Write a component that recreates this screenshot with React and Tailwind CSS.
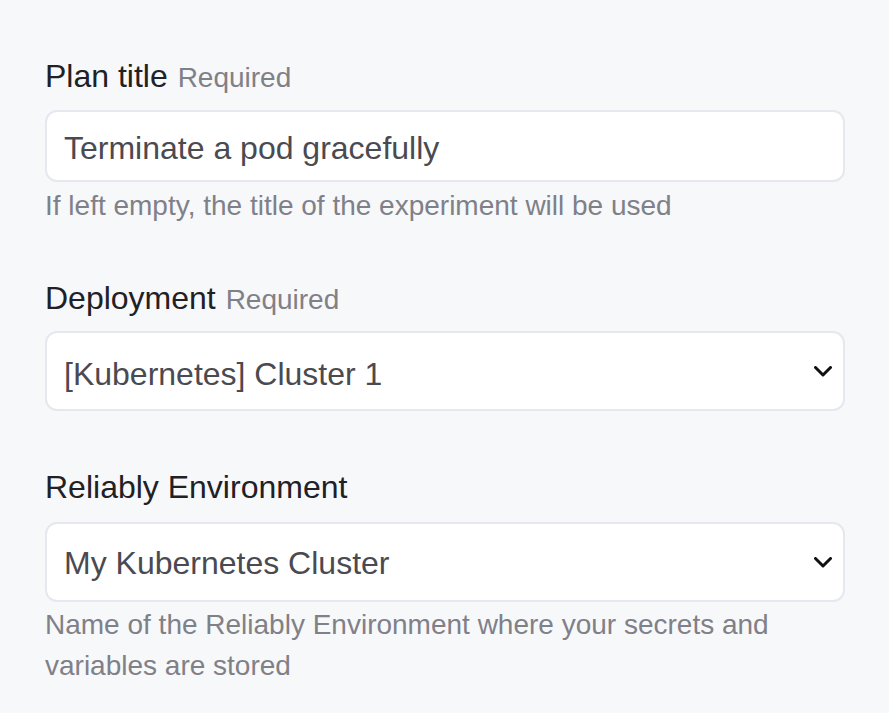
import React from "react";

const Chevron = () => (
  <svg width="18" height="11" viewBox="0 0 18 11" fill="none" className="shrink-0">
    <path d="M1.5 1.5L9 9L16.5 1.5" stroke="#111" strokeWidth="3" strokeLinecap="round" strokeLinejoin="round" />
  </svg>
);

const SelectBox = ({ value, className, textClass }) => (
  <div className={`${className} h-[80px] flex items-center justify-between bg-white border-2 border-[#e6e7ef] rounded-[12px] pl-[17px] pr-[11px] text-[32px] text-[#4a4a50]`}>
    <span className={textClass}>{value}</span>
    <Chevron />
  </div>
);

export default function App() {
  return (
    <div className="min-h-[713px] bg-[#f7f8fa] pt-[52px] pl-[45px] font-['Liberation_Sans',Arial,sans-serif]">
      <div className="w-[800px]">
        <div className="text-[32px] leading-[48px] text-[#212125]">
          Plan title <span className="ml-[1px] text-[28px] text-[#808088]">Required</span>
        </div>
        <div className="mt-[8px] h-[72px] flex items-center bg-white border-2 border-[#e6e7ef] rounded-[12px] pl-[17px] text-[32px] text-[#4a4a50]">
          <span className="pt-[4px]">Terminate a pod gracefully</span>
        </div>
        <p className="mt-[3px] text-[28px] leading-[42px] text-[#808088]">
          If left empty, the title of the experiment will be used
        </p>

        <div className="mt-[47px] text-[32px] leading-[48px] text-[#212125]">
          Deployment <span className="ml-[1px] text-[28px] text-[#808088]">Required</span>
        </div>
        <SelectBox className="mt-[7px]" textClass="pt-[5px]" value="[Kubernetes] Cluster 1" />

        <div className="mt-[52px] text-[32px] leading-[48px] text-[#212125]">
          Reliably Environment
        </div>
        <SelectBox className="mt-[11px]" textClass="pt-[1px]" value="My Kubernetes Cluster" />
        <p className="mt-[2px] text-[28px] leading-[41px] text-[#808088]">
          Name of the Reliably Environment where your secrets and variables are stored
        </p>
      </div>
    </div>
  );
}
